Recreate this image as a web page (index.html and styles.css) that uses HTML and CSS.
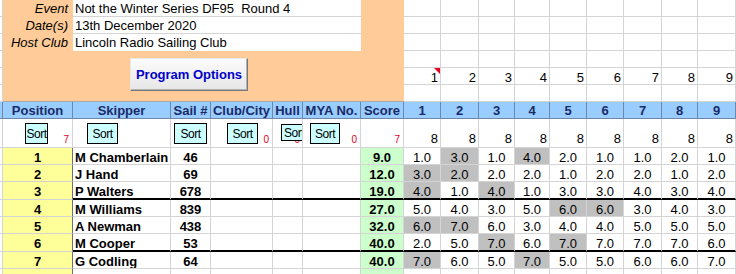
FILE: index.html
```html
<!DOCTYPE html>
<html lang="en">
<head>
  <meta charset="UTF-8">
  <meta name="viewport" content="width=device-width, initial-scale=1.0">
  <title>Not the Winter Series DF95 - Results</title>
  <link rel="stylesheet" href="styles.css">
</head>
<body>
  <div class="sheet">
    <div class="panel">
      <div class="label">Event</div>
      <div class="field">Not the Winter Series DF95&nbsp; Round 4</div>
      <div class="label">Date(s)</div>
      <div class="field">13th December 2020</div>
      <div class="label">Host Club</div>
      <div class="field last">Lincoln Radio Sailing Club</div>
      <button class="options">Program Options</button>
    </div>

    <div class="row"><div></div><div></div><div></div><div></div><div></div><div></div><div></div><div></div><div></div><div></div></div>
    <div class="row"><div></div><div></div><div></div><div></div><div></div><div></div><div></div><div></div><div></div><div></div></div>
    <div class="row"><div></div><div></div><div></div><div></div><div></div><div></div><div></div><div></div><div></div><div></div></div>
    <div class="row"><div></div><div></div><div></div><div></div><div></div><div></div><div></div><div></div><div></div><div></div></div>
    <div class="row nums">
      <div></div>
      <div class="note">1</div><div>2</div><div>3</div><div>4</div><div>5</div><div>6</div><div>7</div><div>8</div><div>9</div>
    </div>
    <div class="row"><div></div><div></div><div></div><div></div><div></div><div></div><div></div><div></div><div></div><div></div></div>

    <!-- column headings -->
    <div class="row head">
      <div></div>
      <div>Position</div>
      <div>Skipper</div>
      <div>Sail #</div>
      <div>Club/City</div>
      <div>Hull</div>
      <div>MYA No.</div>
      <div>Score</div>
      <div>1</div><div>2</div><div>3</div><div>4</div><div>5</div><div>6</div><div>7</div><div>8</div><div>9</div>
    </div>

    <!-- sort buttons and counts -->
    <div class="row sorts">
      <div></div>
      <div><span class="count">7</span><button class="sort sort-pos">Sort</button></div>
      <div><button class="sort sort-skip">Sort</button></div>
      <div><button class="sort sort-sail">Sort</button></div>
      <div><span class="count">0</span><button class="sort sort-club">Sort</button></div>
      <div><span class="count">0</span><button class="sort sort-hull">Sort</button></div>
      <div><span class="count">0</span><button class="sort sort-mya">Sort</button></div>
      <div><span class="count">7</span></div>
      <div><span class="races">8</span></div>
      <div><span class="races">8</span></div>
      <div><span class="races">8</span></div>
      <div><span class="races">8</span></div>
      <div><span class="races">8</span></div>
      <div><span class="races">8</span></div>
      <div><span class="races">8</span></div>
      <div><span class="races">8</span></div>
      <div><span class="races">8</span></div>
    </div>

    <div class="row data">
      <div></div><div class="pos">1</div><div class="name">M Chamberlain</div><div class="sail">46</div>
      <div></div><div></div><div></div><div class="score">9.0</div>
      <div>1.0</div><div class="d">3.0</div><div>1.0</div><div class="d">4.0</div><div>2.0</div><div>1.0</div><div>1.0</div><div>2.0</div><div>1.0</div>
    </div>
    <div class="row data">
      <div></div><div class="pos">2</div><div class="name">J Hand</div><div class="sail">69</div>
      <div></div><div></div><div></div><div class="score">12.0</div>
      <div class="d">3.0</div><div class="d">2.0</div><div>2.0</div><div>2.0</div><div>1.0</div><div>2.0</div><div>2.0</div><div>1.0</div><div>2.0</div>
    </div>
    <div class="row data sep">
      <div></div><div class="pos">3</div><div class="name">P Walters</div><div class="sail">678</div>
      <div></div><div></div><div></div><div class="score">19.0</div>
      <div class="d">4.0</div><div>1.0</div><div class="d">4.0</div><div>1.0</div><div>3.0</div><div>3.0</div><div>4.0</div><div>3.0</div><div>4.0</div>
    </div>
    <div class="row data">
      <div></div><div class="pos">4</div><div class="name">M Williams</div><div class="sail">839</div>
      <div></div><div></div><div></div><div class="score">27.0</div>
      <div>5.0</div><div>4.0</div><div>3.0</div><div>5.0</div><div class="d">6.0</div><div class="d">6.0</div><div>3.0</div><div>4.0</div><div>3.0</div>
    </div>
    <div class="row data">
      <div></div><div class="pos">5</div><div class="name">A Newman</div><div class="sail">438</div>
      <div></div><div></div><div></div><div class="score">32.0</div>
      <div class="d">6.0</div><div class="d">7.0</div><div>6.0</div><div>3.0</div><div>4.0</div><div>4.0</div><div>5.0</div><div>5.0</div><div>5.0</div>
    </div>
    <div class="row data sep">
      <div></div><div class="pos">6</div><div class="name">M Cooper</div><div class="sail">53</div>
      <div></div><div></div><div></div><div class="score">40.0</div>
      <div>2.0</div><div>5.0</div><div class="d">7.0</div><div>6.0</div><div class="d">7.0</div><div>7.0</div><div>7.0</div><div>7.0</div><div>6.0</div>
    </div>
    <div class="row data">
      <div></div><div class="pos">7</div><div class="name">G Codling</div><div class="sail">64</div>
      <div></div><div></div><div></div><div class="score">40.0</div>
      <div class="d">7.0</div><div>6.0</div><div>5.0</div><div class="d">7.0</div><div>5.0</div><div>5.0</div><div>6.0</div><div>6.0</div><div>7.0</div>
    </div>
    <div class="row data">
      <div></div><div class="pos"></div><div class="name"></div><div class="sail"></div>
      <div></div><div></div><div></div><div class="score"></div>
      <div></div><div></div><div></div><div></div><div></div><div></div><div></div><div></div><div></div>
    </div>
  </div>
</body>
</html>
```

FILE: styles.css
```css
body {
  margin: 0;
  font-family: "Liberation Sans", Arial, sans-serif;
  font-size: 13px;
  color: #000;
  background: #fff;
  overflow: hidden;
}

/* sheet columns: edge, position, skipper, sail, club, hull, mya, score, races 1-9 */
.sheet {
  display: grid;
  grid-template-columns: 3px 70px 98px 40px 62px 30px 58px 43px 37px 38px 36px 35px 37px 37px 38px 36px 38px;
  grid-template-rows: repeat(6, 17px) 17px 29px 17px 17px 18px 17px 17px 18px 17px 17px;
}

.row {
  display: contents;
}

.row > div {
  box-sizing: border-box;
  border-right: 1px solid #d4d4d4;
  border-bottom: 1px solid #d4d4d4;
  overflow: hidden;
  white-space: nowrap;
  line-height: 16px;
}

/* event panel */
.panel {
  grid-column: 2 / 9;
  grid-row: 1 / 7;
  background: #ffcc99;
  border-bottom: 1px solid #a9a9a9;
  display: grid;
  grid-template-columns: 70px 288px;
  grid-template-rows: 17px 17px 17px 1fr;
}

.label {
  text-align: right;
  font-style: italic;
  padding: 1px 5px 0 0;
  line-height: 15px;
}

.field {
  background: #fff;
  border-bottom: 1px solid #d4d4d4;
  padding: 1px 0 0 2px;
  line-height: 15px;
  white-space: nowrap;
}

.field.last {
  border-bottom: none;
}

.options {
  grid-column: 1 / 3;
  justify-self: start;
  align-self: start;
  margin: 7px 0 0 127px;
  width: 118px;
  height: 33px;
  padding: 0;
  background: linear-gradient(#fcfcfc, #e6e6e6);
  border: 1px solid;
  border-color: #e8e8e8 #777 #777 #e8e8e8;
  box-shadow: inset -1px -1px 0 #b4b4b4;
  color: #0000cc;
  font: bold 13px "Liberation Sans", Arial, sans-serif;
  cursor: pointer;
}

/* race numbers above the heading */
.nums > div {
  text-align: right;
  padding: 3px 2px 0 0;
  line-height: 14px;
}

.nums > .note {
  position: relative;
}

.nums > .note::after {
  content: "";
  position: absolute;
  top: 0;
  right: 0;
  border-top: 6px solid #e8001c;
  border-left: 6px solid transparent;
}

/* headings */
.head > div {
  background: #99ccff;
  color: #1a2b66;
  font-weight: bold;
  text-align: center;
  padding-top: 1px;
  border-right-color: #6d88a8;
  border-bottom-color: #6d88a8;
}

/* sort row */
.sorts > div {
  display: grid;
}

.sorts > div > * {
  grid-area: 1 / 1;
}

.count {
  justify-self: end;
  align-self: end;
  color: #e8001c;
  font-size: 10px;
  line-height: 10px;
  padding: 0 3px 2px 0;
}

.races {
  justify-self: end;
  align-self: end;
  line-height: 14px;
  padding: 0 2px 1px 0;
}

.sort {
  justify-self: start;
  align-self: start;
  margin-top: 4px;
  height: 21px;
  padding: 0;
  background: #ccffff;
  border: 1px solid #000;
  color: #000;
  font: 12px "Liberation Sans", Arial, sans-serif;
  letter-spacing: -0.5px;
  overflow: hidden;
  white-space: nowrap;
  cursor: pointer;
}

.sort-pos { margin-left: 22px; width: 23px; }
.sort-skip { margin-left: 14px; width: 31px; }
.sort-sail { margin-left: 3px; width: 33px; }
.sort-club { margin-left: 16px; width: 31px; }
.sort-mya { margin-left: 7px; width: 30px; }

.sort-hull {
  margin: 5px 0 0 8px;
  width: 22px;
  height: 17px;
  padding-left: 2px;
  text-align: left;
}

/* results */
.data > div {
  text-align: center;
  padding-top: 2px;
}

.row > .pos {
  background: #ffff99;
  font-weight: bold;
  border-right-color: #707070;
}

.row > .name {
  text-align: left;
  font-weight: bold;
  padding-left: 2px;
}

.row > .sail {
  font-weight: bold;
}

.row > .score {
  background: #ccffcc;
  font-weight: bold;
}

.row > .d {
  background: #c0c0c0;
}

.sep > div {
  border-bottom: 2px solid #000;
}

.sep > .pos,
.sep > div:first-child {
  border-bottom: 1px solid #d4d4d4;
}
```
